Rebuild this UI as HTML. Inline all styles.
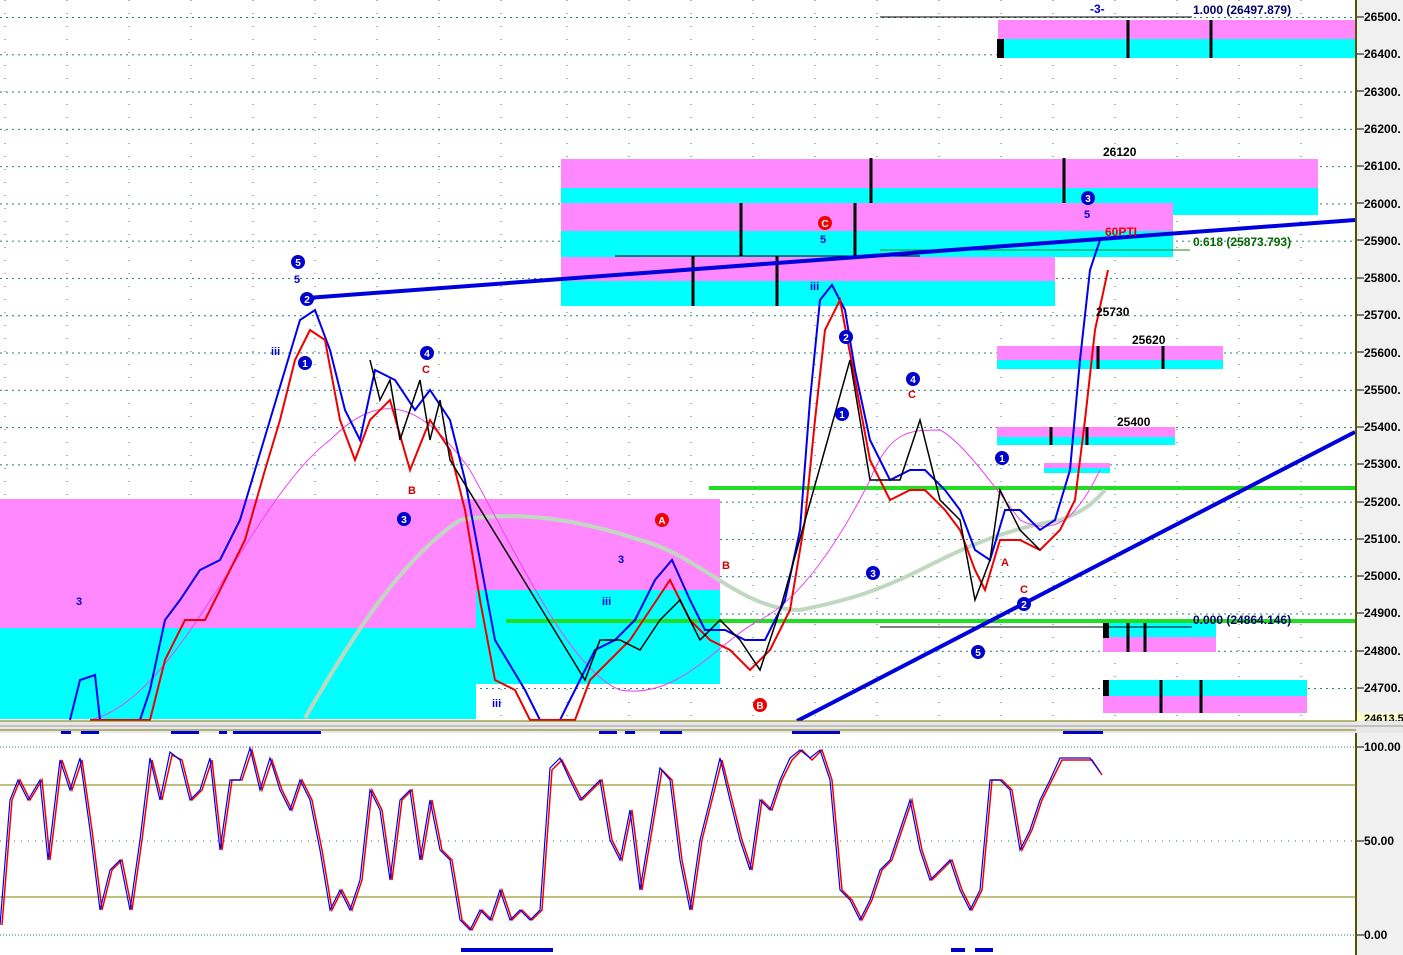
<!DOCTYPE html>
<html><head><meta charset="utf-8"><style>
html,body{margin:0;padding:0;background:#fff;width:1403px;height:955px;overflow:hidden}
svg{display:block}
text{font-family:"Liberation Sans",sans-serif;font-weight:bold}
</style></head><body>
<svg width="1403" height="955" viewBox="0 0 1403 955">
<defs>
<pattern id="gh" x="0" y="0" width="6" height="37.28" patternUnits="userSpaceOnUse" patternTransform="translate(0,17)"><rect x="0" y="0" width="2" height="1" fill="#2a7a7a"/></pattern>
</defs>
<rect width="1403" height="955" fill="#fff"/>
<!-- main grid -->
<rect x="0" y="0" width="1356" height="721" fill="url(#gh)"/>
<g stroke="#2a7a7a" stroke-width="1" stroke-dasharray="1,12">
<line x1="5" y1="0" x2="5" y2="721"/><line x1="67" y1="0" x2="67" y2="721"/><line x1="129" y1="0" x2="129" y2="721"/><line x1="191" y1="0" x2="191" y2="721"/><line x1="253" y1="0" x2="253" y2="721"/><line x1="315" y1="0" x2="315" y2="721"/><line x1="377" y1="0" x2="377" y2="721"/><line x1="439" y1="0" x2="439" y2="721"/><line x1="501" y1="0" x2="501" y2="721"/><line x1="567" y1="0" x2="567" y2="721"/><line x1="629" y1="0" x2="629" y2="721"/><line x1="691" y1="0" x2="691" y2="721"/><line x1="753" y1="0" x2="753" y2="721"/><line x1="815" y1="0" x2="815" y2="721"/><line x1="877" y1="0" x2="877" y2="721"/><line x1="939" y1="0" x2="939" y2="721"/><line x1="1001" y1="0" x2="1001" y2="721"/><line x1="1053" y1="0" x2="1053" y2="721"/><line x1="1115" y1="0" x2="1115" y2="721"/><line x1="1177" y1="0" x2="1177" y2="721"/><line x1="1239" y1="0" x2="1239" y2="721"/><line x1="1301" y1="0" x2="1301" y2="721"/>
</g>
<!-- zones -->
<rect x="0" y="499" width="720" height="129" fill="#ff88ff"/>
<rect x="0" y="628" width="476" height="91" fill="#00ffff"/>
<rect x="476" y="590" width="244" height="94" fill="#00ffff"/>
<rect x="998" y="20" width="357" height="19" fill="#ff88ff"/>
<rect x="998" y="39" width="357" height="19" fill="#00ffff"/>
<rect x="997" y="39" width="7" height="19" fill="#000"/>
<rect x="561" y="159" width="757" height="29" fill="#ff88ff"/>
<rect x="561" y="188" width="757" height="27" fill="#00ffff"/>
<rect x="561" y="203" width="612" height="28" fill="#ff88ff"/>
<rect x="561" y="231" width="612" height="26" fill="#00ffff"/>
<rect x="561" y="257" width="494" height="24" fill="#ff88ff"/>
<rect x="561" y="281" width="494" height="25" fill="#00ffff"/>
<rect x="997" y="346" width="226" height="14" fill="#ff88ff"/>
<rect x="997" y="360" width="226" height="9" fill="#00ffff"/>
<rect x="997" y="427" width="178" height="10" fill="#ff88ff"/>
<rect x="997" y="437" width="178" height="8" fill="#00ffff"/>
<rect x="1044" y="463" width="66" height="5" fill="#ff88ff"/>
<rect x="1044" y="468" width="66" height="5" fill="#00ffff"/>
<rect x="1103" y="623" width="113" height="14" fill="#00ffff"/>
<rect x="1103" y="637" width="113" height="15" fill="#ff88ff"/>
<rect x="1103" y="680" width="204" height="16" fill="#00ffff"/>
<rect x="1103" y="696" width="204" height="17" fill="#ff88ff"/>
<g fill="#000"><rect x="1103" y="623" width="6" height="15"/><rect x="1103" y="680" width="6" height="16"/></g>
<!-- black ticks -->
<g stroke="#000" stroke-width="3">
<line x1="1128" y1="20" x2="1128" y2="58"/><line x1="1211" y1="20" x2="1211" y2="58"/>
<line x1="871" y1="158" x2="871" y2="203"/><line x1="1064" y1="158" x2="1064" y2="203"/>
<line x1="741" y1="203" x2="741" y2="256"/><line x1="855" y1="203" x2="855" y2="256"/>
<line x1="693" y1="256" x2="693" y2="306"/><line x1="777" y1="256" x2="777" y2="306"/>
<line x1="1163" y1="346" x2="1163" y2="369"/><line x1="1098" y1="346" x2="1098" y2="369"/>
<line x1="1051" y1="427" x2="1051" y2="445"/><line x1="1087" y1="427" x2="1087" y2="445"/>
<line x1="1128" y1="623" x2="1128" y2="652"/><line x1="1145" y1="623" x2="1145" y2="652"/>
<line x1="1161" y1="680" x2="1161" y2="713"/><line x1="1201" y1="680" x2="1201" y2="713"/>
</g>
<g stroke="#000" stroke-width="1">
<line x1="880" y1="17" x2="1192" y2="17"/><line x1="615" y1="256" x2="920" y2="256"/><line x1="880" y1="627" x2="1192" y2="627"/>
</g>
<line x1="880" y1="250" x2="1190" y2="250" stroke="#1a8a1a" stroke-width="1"/>
<!-- green horizontals -->
<line x1="709" y1="488" x2="1355" y2="488" stroke="#22dd22" stroke-width="4"/>
<line x1="506" y1="621" x2="1355" y2="621" stroke="#22dd22" stroke-width="4"/>
<!-- MA curves -->
<path d="M305,718 C350,640 400,560 460,520 C520,510 580,520 640,540 C700,555 740,610 800,610 C850,600 880,590 920,570 C960,550 1000,530 1060,520 C1090,510 1100,495 1105,490" stroke="#c0d8c0" stroke-width="4" fill="none"/>
<path d="M90,720 C180,700 250,500 330,440 C380,390 420,400 470,470 C520,560 570,670 620,690 C680,700 720,640 760,620 C800,600 840,540 870,480 C890,430 910,430 940,430 C960,440 990,480 1020,520 C1060,540 1080,510 1100,470" stroke="#ee44ee" stroke-width="1" fill="none"/>
<!-- price lines -->
<polyline fill="none" stroke="#0000ee" stroke-width="2" points="70,720 80,680 95,675 100,720 140,720 150,690 165,620 180,600 200,570 220,560 240,520 255,470 270,420 285,370 300,320 315,310 330,350 345,410 360,440 375,370 395,380 415,410 430,390 450,420 465,480 480,560 495,640 510,665 525,690 540,720 560,720 575,690 595,650 615,640 635,620 655,580 672,560 690,600 705,630 725,630 745,640 765,640 785,600 800,530 810,400 820,300 832,285 845,310 855,370 870,440 890,480 910,470 925,470 945,490 960,510 975,550 990,560 1005,510 1020,510 1040,530 1055,520 1070,470 1080,360 1090,270 1100,240"/>
<polyline fill="none" stroke="#ee0000" stroke-width="2" points="90,720 150,720 165,660 185,620 205,620 225,580 245,540 265,470 280,420 295,360 310,330 325,340 340,420 355,460 370,420 390,400 410,470 430,420 450,450 465,510 480,600 495,680 515,690 530,720 575,720 590,680 610,660 630,640 650,610 670,580 690,620 710,640 730,650 750,670 770,650 790,610 805,520 815,420 825,330 840,300 855,380 870,460 890,500 910,490 925,490 945,510 960,530 975,570 985,590 1000,540 1020,540 1040,550 1060,530 1075,500 1085,420 1095,330 1108,270"/>
<!-- black candles region -->
<polyline fill="none" stroke="#000" stroke-width="1.5" points="370,360 380,400 390,380 400,440 410,410 420,380 430,440 440,400 450,460 585,680 600,640 620,640 640,650 660,620 680,600 700,640 720,620 740,640 760,670 780,610 850,360 870,480 900,480 920,420 940,500 960,520 975,600 990,560 1000,490 1020,530 1040,550"/>
<!-- trend lines -->
<line x1="307" y1="298" x2="1355" y2="220" stroke="#0000dd" stroke-width="4"/>
<line x1="797" y1="721" x2="1355" y2="432" stroke="#0000dd" stroke-width="4"/>
<!-- labels -->
<g font-size="12">
<text x="1090" y="13" fill="#0000cc">-3-</text>
<text x="1193" y="14" fill="#000066">1.000 (26497.879)</text>
<text x="1103" y="156" fill="#000">26120</text>
<text x="1193" y="246" fill="#006600">0.618 (25873.793)</text>
<text x="1096" y="316" fill="#000">25730</text>
<text x="1132" y="344" fill="#000">25620</text>
<text x="1117" y="426" fill="#000">25400</text>
<text x="1193" y="624" fill="#000066">0.000 (24864.146)</text>
<text x="1105" y="236" fill="#ee0000">60PTI</text>
</g>
<g fill="#0000cc"><circle cx="298" cy="262" r="7"/><circle cx="307" cy="299" r="7"/><circle cx="305" cy="363" r="7"/><circle cx="427" cy="353" r="7"/><circle cx="404" cy="519" r="7"/><circle cx="846" cy="337" r="7"/><circle cx="842" cy="414" r="7"/><circle cx="913" cy="379" r="7"/><circle cx="873" cy="573" r="7"/><circle cx="1002" cy="458" r="7"/><circle cx="1024" cy="604" r="7"/><circle cx="978" cy="652" r="7"/><circle cx="1088" cy="198" r="7"/></g>
<g fill="#ee0000"><circle cx="825" cy="223" r="7"/><circle cx="662" cy="520" r="7"/><circle cx="760" cy="705" r="7"/></g>
<g font-size="10" fill="#fff" text-anchor="middle"><text x="298" y="266">5</text><text x="307" y="303">2</text><text x="305" y="367">1</text><text x="427" y="357">4</text><text x="404" y="523">3</text><text x="846" y="341">2</text><text x="842" y="418">1</text><text x="913" y="383">4</text><text x="873" y="577">3</text><text x="1002" y="462">1</text><text x="1024" y="608">2</text><text x="978" y="656">5</text><text x="1088" y="202">3</text><text x="825" y="227">C</text><text x="662" y="524">A</text><text x="760" y="709">B</text></g>
<g font-size="11" fill="#0000cc"><text x="76" y="605">3</text><text x="294" y="283">5</text><text x="271" y="355">iii</text><text x="820" y="243">5</text><text x="810" y="290">iii</text><text x="1084" y="218">5</text><text x="602" y="605">iii</text><text x="618" y="563">3</text><text x="492" y="707">iii</text></g>
<g font-size="11" fill="#cc0000"><text x="422" y="373">C</text><text x="408" y="494">B</text><text x="722" y="569">B</text><text x="908" y="398">C</text><text x="1020" y="593">C</text><text x="1001" y="566">A</text></g>
<!-- axis -->
<rect x="1357" y="0" width="46" height="955" fill="#f0f0f0"/>
<line x1="1356" y1="0" x2="1356" y2="955" stroke="#555500" stroke-width="2"/>
<g font-size="12" fill="#000">
<text x="1364" y="21">26500.</text><text x="1364" y="58">26400.</text><text x="1364" y="96">26300.</text><text x="1364" y="133">26200.</text><text x="1364" y="170">26100.</text><text x="1364" y="208">26000.</text><text x="1364" y="245">25900.</text><text x="1364" y="282">25800.</text><text x="1364" y="319">25700.</text><text x="1364" y="357">25600.</text><text x="1364" y="394">25500.</text><text x="1364" y="431">25400.</text><text x="1364" y="468">25300.</text><text x="1364" y="506">25200.</text><text x="1364" y="543">25100.</text><text x="1364" y="580">25000.</text><text x="1364" y="617">24900.</text><text x="1364" y="655">24800.</text><text x="1364" y="692">24700.</text>
<text x="1364" y="751">100.00</text><text x="1364" y="845">50.00</text><text x="1364" y="939">0.00</text>
</g>
<g stroke="#000"><line x1="1357" y1="17" x2="1364" y2="17"/><line x1="1357" y1="54" x2="1364" y2="54"/><line x1="1357" y1="91" x2="1364" y2="91"/><line x1="1357" y1="129" x2="1364" y2="129"/><line x1="1357" y1="166" x2="1364" y2="166"/><line x1="1357" y1="203" x2="1364" y2="203"/><line x1="1357" y1="240" x2="1364" y2="240"/><line x1="1357" y1="278" x2="1364" y2="278"/><line x1="1357" y1="315" x2="1364" y2="315"/><line x1="1357" y1="352" x2="1364" y2="352"/><line x1="1357" y1="390" x2="1364" y2="390"/><line x1="1357" y1="427" x2="1364" y2="427"/><line x1="1357" y1="464" x2="1364" y2="464"/><line x1="1357" y1="502" x2="1364" y2="502"/><line x1="1357" y1="539" x2="1364" y2="539"/><line x1="1357" y1="576" x2="1364" y2="576"/><line x1="1357" y1="613" x2="1364" y2="613"/><line x1="1357" y1="651" x2="1364" y2="651"/><line x1="1357" y1="688" x2="1364" y2="688"/><line x1="1357" y1="747" x2="1364" y2="747"/><line x1="1357" y1="841" x2="1364" y2="841"/><line x1="1357" y1="935" x2="1364" y2="935"/></g>
<rect x="1357" y="713" width="46" height="10" fill="#ffffcc"/>
<text x="1364" y="722" font-size="11" fill="#000">24613.5</text>
<!-- separator -->
<rect x="0" y="721" width="1403" height="12" fill="#e8e8e8"/>
<line x1="0" y1="721" x2="1356" y2="721" stroke="#777700" stroke-width="1"/>
<line x1="0" y1="726" x2="1403" y2="726" stroke="#999" stroke-width="1"/>
<line x1="0" y1="730" x2="1356" y2="730" stroke="#777700" stroke-width="1"/>
<g fill="#0000cc"><rect x="61" y="731" width="10" height="3"/><rect x="81" y="731" width="18" height="3"/><rect x="171" y="731" width="28" height="3"/><rect x="219" y="731" width="8" height="3"/><rect x="233" y="731" width="88" height="3"/><rect x="599" y="731" width="18" height="3"/><rect x="625" y="731" width="10" height="3"/><rect x="660" y="731" width="22" height="3"/><rect x="792" y="731" width="48" height="3"/><rect x="1063" y="731" width="40" height="3"/><rect x="461" y="948" width="92" height="4"/><rect x="951" y="948" width="14" height="4"/><rect x="975" y="948" width="18" height="4"/></g>
<!-- stochastic grid -->
<line x1="0" y1="747" x2="1356" y2="747" stroke="#2a7a7a" stroke-dasharray="1,2"/>
<line x1="0" y1="841" x2="1356" y2="841" stroke="#2a7a7a" stroke-dasharray="1,6"/>
<line x1="0" y1="935" x2="1356" y2="935" stroke="#2a7a7a" stroke-dasharray="1,2"/>
<line x1="0" y1="785" x2="1356" y2="785" stroke="#808000"/>
<line x1="0" y1="897" x2="1356" y2="897" stroke="#808000"/>
<polyline fill="none" stroke="#ee0000" stroke-width="1.5" points="2,925 12,800 20,780 30,800 42,780 50,860 62,760 72,790 82,760 92,830 102,910 112,870 122,860 132,910 142,840 152,760 162,800 172,755 182,760 192,800 202,790 212,760 222,850 232,780 242,780 252,750 262,790 272,760 282,790 292,810 302,780 312,800 322,850 332,910 342,890 352,910 362,880 372,790 382,810 392,880 402,800 412,790 422,860 432,800 442,850 452,860 462,920 472,930 482,910 492,920 502,890 512,920 522,910 532,920 542,910 552,770 562,760 572,780 582,800 592,790 602,780 612,840 622,860 632,810 642,890 652,830 662,770 672,780 682,860 692,910 702,840 712,800 722,760 732,800 742,840 752,870 762,800 772,810 782,780 792,760 802,750 812,760 822,750 832,780 842,890 852,900 862,920 872,900 882,870 892,860 902,830 912,800 922,850 932,880 942,870 952,860 962,890 972,910 982,890 992,780 1002,780 1012,790 1022,850 1032,830 1042,800 1052,780 1062,760 1072,760 1082,760 1092,760 1102,775"/>
<polyline fill="none" stroke="#0000ee" stroke-width="1.2" points="0,925 10,800 18,780 28,800 40,780 48,860 60,760 70,790 80,758 90,830 100,910 110,870 120,860 130,910 140,840 150,758 160,800 170,752 180,760 190,800 200,790 210,758 220,850 230,780 240,780 250,748 260,790 270,758 280,790 290,810 300,780 310,800 320,850 330,910 340,890 350,910 360,880 370,790 380,810 390,880 400,800 410,790 420,860 430,800 440,850 450,860 460,920 470,930 480,910 490,920 500,890 510,920 520,910 530,920 540,910 550,768 560,758 570,780 580,800 590,790 600,780 610,840 620,860 630,810 640,890 650,830 660,768 670,780 680,860 690,910 700,840 710,800 720,758 730,800 740,840 750,870 760,800 770,810 780,780 790,758 800,750 810,758 820,750 830,780 840,890 850,900 860,920 870,900 880,870 890,860 900,830 910,800 920,850 930,880 940,870 950,860 960,890 970,910 980,890 990,780 1000,780 1010,790 1020,850 1030,830 1040,800 1050,780 1060,758 1070,758 1080,758 1090,758 1100,772"/>
</svg>
</body></html>
